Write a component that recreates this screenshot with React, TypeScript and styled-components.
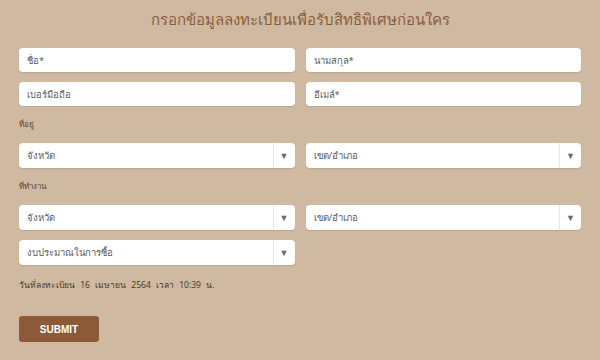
import styled, { createGlobalStyle } from "styled-components";

const GlobalStyle = createGlobalStyle`
  html, body {
    margin: 0;
    padding: 0;
    background: #cfb9a1;
  }
  body {
    font-family: "Noto Sans", "Liberation Sans", sans-serif;
  }
`;

const Page = styled.div`
  width: 600px;
  height: 360px;
  box-sizing: border-box;
  padding: 8px 19px 0;
  background: #cfb9a1;
  display: flex;
  flex-direction: column;
`;

const Title = styled.h1`
  margin: 0 0 18px;
  text-align: center;
  font-size: 15px;
  font-weight: 400;
  line-height: 22px;
  color: #8a5c3b;
`;

const Row = styled.div<{ $gap?: number }>`
  display: grid;
  grid-template-columns: 1fr 1fr;
  column-gap: 11px;
  margin-bottom: ${(p) => p.$gap ?? 10}px;
`;

const Field = styled.div`
  height: 24px;
  background: #fff;
  border-radius: 4px;
  box-shadow: 0 1px 1px rgba(90, 60, 30, 0.15);
  display: flex;
  align-items: center;
  padding-left: 8px;
  font-size: 9.5px;
  color: #5a5a5a;
  box-sizing: border-box;
`;

const SelectBox = styled(Field)`
  height: 25px;
  padding-right: 0;
`;

const SelectText = styled.span`
  flex: 1;
`;

const Arrow = styled.span`
  width: 21px;
  height: 100%;
  border-left: 1px solid #e6e6e6;
  display: flex;
  align-items: center;
  justify-content: center;
  font-size: 9px;
  color: #6b6b6b;
`;

const Label = styled.div`
  font-size: 8px;
  color: #5b4634;
  height: 36px;
  line-height: 34px;
  margin-top: -9px;
`;

const DateLine = styled.div`
  font-size: 8.5px;
  color: #4b3a2b;
  margin-top: 13px;
  word-spacing: 3px;
`;

const SubmitButton = styled.button`
  margin-top: 24px;
  width: 80px;
  height: 26px;
  border: none;
  border-radius: 3px;
  background: #8c5a37;
  color: #fff;
  font-family: "Liberation Sans", sans-serif;
  font-weight: 700;
  font-size: 10px;
`;

const Select = ({ text }: { text: string }) => (
  <SelectBox>
    <SelectText>{text}</SelectText>
    <Arrow>▼</Arrow>
  </SelectBox>
);

const App = () => {
  return (
    <>
      <GlobalStyle />
      <Page>
        <Title>กรอกข้อมูลลงทะเบียนเพื่อรับสิทธิพิเศษก่อนใคร</Title>
        <Row>
          <Field>ชื่อ*</Field>
          <Field>นามสกุล*</Field>
        </Row>
        <Row>
          <Field>เบอร์มือถือ</Field>
          <Field>อีเมล์*</Field>
        </Row>
        <Label>ที่อยู่</Label>
        <Row>
          <Select text="จังหวัด" />
          <Select text="เขต/อำเภอ" />
        </Row>
        <Label>ที่ทำงาน</Label>
        <Row>
          <Select text="จังหวัด" />
          <Select text="เขต/อำเภอ" />
        </Row>
        <Row $gap={0}>
          <Select text="งบประมาณในการซื้อ" />
        </Row>
        <DateLine>วันที่ลงทะเบียน 16 เมษายน 2564 เวลา 10:39 น.</DateLine>
        <div>
          <SubmitButton>SUBMIT</SubmitButton>
        </div>
      </Page>
    </>
  );
};

export default App;
